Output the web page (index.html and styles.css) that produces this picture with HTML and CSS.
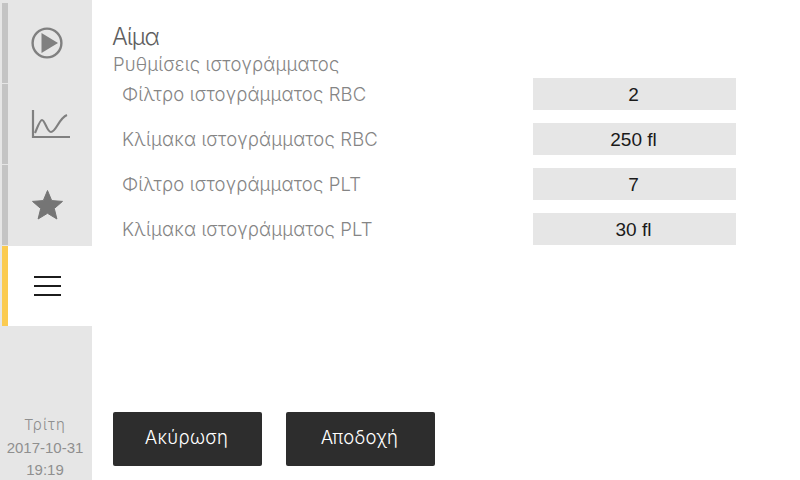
FILE: index.html
```html
<!DOCTYPE html>
<html lang="el">
<head>
<meta charset="utf-8">
<title>Αίμα</title>
<link rel="stylesheet" href="styles.css">
</head>
<body>
<div class="app">
  <nav class="sidebar">
    <div class="tabs">
      <div class="tab">
        <svg class="icon" viewBox="0 0 36 36"><circle cx="18" cy="18" r="14.4" fill="none" stroke="#808080" stroke-width="2.4"/><path d="M12.5 8 L29 18 L12.5 28 Z" fill="#808080"/></svg>
      </div>
      <div class="tab">
        <svg class="icon-wide" viewBox="0 0 40 30"><path d="M2 1 V28 H39" fill="none" stroke="#808080" stroke-width="2.2"/><path d="M4 24 C7 17 9 11 11 11 C14 11 16 23 20 23 C25 23 28 9 36 6" fill="none" stroke="#808080" stroke-width="2.2"/></svg>
      </div>
      <div class="tab">
        <svg class="icon" viewBox="0 0 36 36"><path d="M18.5 3.5 L22.7 13.6 L33.5 14.4 L25.3 21.5 L27.9 32 L18.5 26.3 L9.1 32 L11.7 21.5 L3.5 14.4 L14.3 13.6 Z" fill="#757575" stroke="#757575" stroke-linejoin="round"/></svg>
      </div>
      <div class="tab active">
        <div class="burger"><span></span><span></span><span></span></div>
      </div>
    </div>
    <div class="clock">
      <div class="day">Τρίτη</div>
      <div>2017-10-31</div>
      <div>19:19</div>
    </div>
  </nav>
  <main class="content">
    <h1 class="title">Αίμα</h1>
    <h2 class="subtitle">Ρυθμίσεις ιστογράμματος</h2>
    <div class="rows">
      <div class="row"><span class="label">Φίλτρο ιστογράμματος RBC</span><span class="value">2</span></div>
      <div class="row"><span class="label">Κλίμακα ιστογράμματος RBC</span><span class="value">250 fl</span></div>
      <div class="row"><span class="label">Φίλτρο ιστογράμματος PLT</span><span class="value">7</span></div>
      <div class="row"><span class="label">Κλίμακα ιστογράμματος PLT</span><span class="value">30 fl</span></div>
    </div>
    <div class="actions">
      <button class="btn">Ακύρωση</button>
      <button class="btn">Αποδοχή</button>
    </div>
  </main>
</div>
</body>
</html>
```
FILE: styles.css
```css
* { box-sizing: border-box; }
html, body { margin: 0; padding: 0; background: #fff; }
body { font-family: "Liberation Sans", "DejaVu Sans", sans-serif; }
.app { display: flex; width: 800px; height: 480px; overflow: hidden; }
.sidebar { width: 92px; height: 480px; background: #e6e6e6; display: flex; flex-direction: column; justify-content: space-between; padding-top: 3px; }
.tabs { display: flex; flex-direction: column; gap: 1px; }
.tab { height: 80px; margin-left: 2px; border-left: 6px solid #c4c4c4; display: flex; align-items: center; justify-content: center; padding-right: 6px; }
.tab.active { background: #fff; border-left-color: #fbcb50; }
.icon { width: 36px; height: 36px; }
.icon-wide { width: 40px; height: 30px; margin-left: 8px; }
.burger { width: 27px; display: flex; flex-direction: column; gap: 7px; }
.burger span { display: block; height: 2px; background: #1c1c1c; }
.clock { text-align: center; font-size: 15px; line-height: 22.5px; color: #8f8f8f; margin-bottom: -1.5px; padding-right: 2px; }
.day { font-family: Inter, "Liberation Sans", sans-serif; font-weight: 300; letter-spacing: 1.2px; }
.content { flex: 1; padding: 22px 0 14px 20px; display: flex; flex-direction: column; }
.title { margin: 0; font-family: Inter, sans-serif; font-size: 23.5px; font-weight: 300; line-height: 30px; letter-spacing: -1.1px; color: #5f5f5f; }
.subtitle { margin: 0 0 0 1px; font-family: Inter, sans-serif; font-size: 18.5px; font-weight: 300; line-height: 24px; letter-spacing: 0.17px; color: #858585; }
.rows { margin-top: 2px; display: flex; flex-direction: column; gap: 13px; }
.row { display: flex; justify-content: space-between; align-items: center; height: 32px; padding-left: 10px; width: 624px; }
.label { font-family: Inter, sans-serif; font-weight: 300; font-size: 18.5px; letter-spacing: 0.15px; color: #858585; }
.value { width: 203px; height: 32px; background: #e6e6e6; color: #1a1a1a; font-size: 19px; line-height: 33px; text-align: center; padding-right: 2px; }
.actions { margin: auto 0 0 1px; display: flex; gap: 24px; }
.btn { width: 149px; height: 54px; border: 0; border-radius: 2px; background: #2d2d2d; color: #fff; font: 300 18.5px Inter, sans-serif; letter-spacing: 0.3px; padding: 0 2px 4px 0; }
```
